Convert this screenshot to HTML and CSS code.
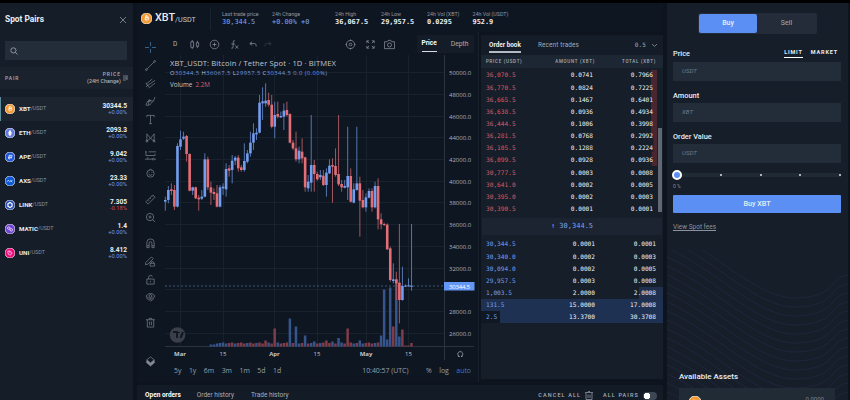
FILE: index.html
```html
<!DOCTYPE html>
<html lang="en">
<head>
<meta charset="utf-8">
<title>Spot trading</title>
<link rel="stylesheet" href="styles.css">
</head>
<body>
<div class="app">
  <aside class="pairs">
    <div class="pairs-title"><h1>Spot Pairs</h1><svg width="8" height="8" viewBox="0 0 8 8"><path d="M1 1l6 6M7 1L1 7"/></svg></div>
    <div class="search"><svg width="8" height="8" viewBox="0 0 8 8"><circle cx="3.4" cy="3.4" r="2.6"/><path d="M5.3 5.3L7.5 7.5"/></svg></div>
    <div class="pairs-head"><span>PAIR</span><div>PRICE<small>(24H Change)</small></div><svg width="5" height="8" viewBox="0 0 5 8"><path d="M0 2h3M0 4h4M0 6h3M4 1v5"/></svg></div>
    <ul class="pair-list">
      <li class="active"><svg class="coin" viewBox="0 0 12 12"><circle cx="6" cy="6" r="6" fill="#f39a35"/><path d="M4.5 3.2l3 .5q1.2.5.4 1.6l-3.2-.4 3 .5q1.4.8.1 2.2l-3.6-.6M5.2 3.3l-.7 4M5.8 2.3v1M5.5 7.6v1.4"/></svg><b>XBT</b><i>/USDT</i><div class="quote">30344.5<em>+0.00%</em></div></li>
      <li><svg class="coin" viewBox="0 0 12 12"><circle cx="6" cy="6" r="6" fill="#627be0"/><path d="M6 2L3.7 6 6 7.4 8.300 6zM3.7 7L6 10l2.300-3" fill="#fff" stroke="none"/></svg><b>ETH</b><i>/USDT</i><div class="quote">2093.3<em>+0.00%</em></div></li>
      <li><svg class="coin" viewBox="0 0 12 12"><circle cx="6" cy="6" r="6" fill="#1e55d5"/><path d="M4 8.500L5 4h3.500L7.500 8M4 6.500h4M6 4L5.500 9"/></svg><b>APE</b><i>/USDT</i><div class="quote">9.042<em>+0.00%</em></div></li>
      <li><svg class="coin" viewBox="0 0 12 12"><circle cx="6" cy="6" r="6" fill="#0d58d6"/><path d="M2.500 7l1.500-2 1.500 2M6.500 5l2 2.300M8.700 5L6.500 7.300"/></svg><b>AXS</b><i>/USDT</i><div class="quote">23.33<em>+0.00%</em></div></li>
      <li><svg class="coin" viewBox="0 0 12 12"><circle cx="6" cy="6" r="6" fill="#294fb5"/><path d="M6 3l2.500 1.500v3L6 9 3.500 7.500v-3z" stroke-width="1.400"/></svg><b>LINK</b><i>/USDT</i><div class="quote">7.305<em class="neg">-0.18%</em></div></li>
      <li><svg class="coin" viewBox="0 0 12 12"><circle cx="6" cy="6" r="6" fill="#7142cf"/><circle cx="4.500" cy="5" r="1.500"/><circle cx="7.500" cy="7" r="1.500"/></svg><b>MATIC</b><i>/USDT</i><div class="quote">1.4<em>+0.00%</em></div></li>
      <li><svg class="coin" viewBox="0 0 12 12"><circle cx="6" cy="6" r="6" fill="#ed087c"/><path d="M3 4q1 5 3 4.500T8.500 6Q7 3 4 3.500l3 3"/></svg><b>UNI</b><i>/USDT</i><div class="quote">8.412<em>+0.00%</em></div></li>
    </ul>
  </aside>

  <main>
    <header class="ticker">
      <div class="symbol"><svg class="coin" viewBox="0 0 12 12"><circle cx="6" cy="6" r="6" fill="#f39a35"/><path d="M4.5 3.200l3 .5q1.200.5.4 1.600l-3.200-.4 3 .5q1.400.8.1 2.200l-3.600-.6M5.200 3.300l-.7 4M5.800 2.300v1M5.500 7.600v1.400"/></svg><b>XBT</b><span>/USDT</span></div>
      <div class="stat blue s1"><label>Last trade price</label>30,344.5</div>
      <div class="stat blue s2"><label>24h Change</label>+0.00% +0</div>
      <div class="stat s3"><label>24h High</label>36,067.5</div>
      <div class="stat s4"><label>24h Low</label>29,957.5</div>
      <div class="stat s5"><label>24h Vol (XBT)</label>0.0295</div>
      <div class="stat s6"><label>24h Vol (USDT)</label>952.9</div>
    </header>

    <div class="market">
      <section class="chart">
        <nav class="tools">
          <svg class="cross" viewBox="0 0 12 12"><path d="M6 0v4.500M6 7.500V12M0 6h4.500M7.500 6H12"/></svg>
          <svg viewBox="0 0 12 12"><path d="M2 10l8-8"/><circle cx="1.500" cy="10.500" r="1"/><circle cx="10.500" cy="1.500" r="1"/></svg>
          <svg viewBox="0 0 12 12"><path d="M1 7l7-6M1 9.500l10-7M4 11l7-5.500M1 5l3 5"/></svg>
          <svg viewBox="0 0 12 12"><path d="M1 10q1-5 4-5t4 1l2-5M1 10q5 1 7-4M4 5v5"/><circle cx="5" cy="5" r="1"/></svg>
          <svg viewBox="0 0 12 12"><path d="M2 3.500V1.500h8v2M6 1.500v9M4.500 10.500h3"/></svg>
          <svg viewBox="0 0 12 12"><path d="M2 10V2l4 5 4-5v8M2 10l4-3 4 3"/><circle cx="2" cy="10" r="1"/><circle cx="10" cy="10" r="1"/></svg>
          <svg viewBox="0 0 12 12"><path d="M0 2h2M4 2h8M1 2v4h10V4M0 10h8M10 10h2M3 10V8"/><circle cx="9" cy="10" r="1"/></svg>
          <svg viewBox="0 0 12 12"><circle cx="6" cy="6" r="4"/><path d="M4 7q2 2 4 0M4.500 4.500v.8M7.500 4.500v.8M5 2l1-1 1 1"/></svg>
          <svg class="break" viewBox="0 0 12 12"><path d="M1 8.500L8.500 1l2.500 2.500L3.500 11zM3.500 6.500l1 1M5.500 4.500l1 1M7.500 2.500l1 1"/></svg>
          <svg viewBox="0 0 12 12"><circle cx="5.500" cy="5.500" r="4"/><path d="M8.500 8.500l2.500 2.500M3.800 5.500h3.400M5.500 3.800v3.400"/></svg>
          <svg class="break" viewBox="0 0 12 12"><path d="M2 10.500V5a4 4 0 0 1 8 0v5.500H7.500V5.500a1.500 1.500 0 0 0-3 0v5zM2 8.500h2.500M7.500 8.500H10"/></svg>
          <svg viewBox="0 0 12 12"><path d="M1 7l6-6 2 2-6 6-2.500.5zM5.500 8h5v3h-5zM6.500 8q0-2 1.500-2t1.500 2"/></svg>
          <svg viewBox="0 0 12 12"><path d="M2 5.500h8V11H2zM4 5.500V3.500q0-2 2-2t2 1.500M6 7.500v1.500"/></svg>
          <svg viewBox="0 0 12 12"><path d="M1 4.500q5-6 10 0-5 5-10 0zM1 6q3 4 6 2.500M6 10l4-3"/><circle cx="6" cy="4.300" r="1.500"/></svg>
          <svg class="trash" viewBox="0 0 12 12"><path d="M1 3h10M2.500 3v8h7V3M4.500 3V1.500h3V3M5 5v4M7 5v4"/></svg>
          <svg class="layers" viewBox="0 0 12 12"><path d="M1.500 4.500L6 1l4.500 3.500L6 8z" /><path d="M1.500 7L6 11l4.500-4-1-2.500L6 7.500 2.500 4.500z" fill="#9ba1ac"/></svg>
        </nav>
        <div class="chart-main">
          <div class="chart-bar">
            <span class="interval">D</span>
            <svg class="i-candle" viewBox="0 0 12 12"><path d="M2 3h3v6H2zM3.500 1v2M3.500 9v2M8 4h2.500v4H8zM9.200 2v2M9.200 8v2"/></svg>
            <svg class="i-plus" viewBox="0 0 12 12"><circle cx="6" cy="6" r="4.700"/><path d="M3.800 6h4.400M6 3.800v4.400"/></svg>
            <svg class="i-fx" viewBox="0 0 12 12"><path d="M6.500 2Q4.500 1 4.500 4v4q0 3-2 2M2.500 5.500h4M7 7l3 3.500M10 7l-3 3.500"/></svg>
            <svg class="i-undo" viewBox="0 0 12 12"><path d="M4.500 3L2 5l2.500 2M2 5h5.500Q9 5 9 8"/></svg>
            <svg class="i-redo dim" viewBox="0 0 12 12"><path d="M7.500 3L10 5 7.500 7M10 5H4.500Q3 5 3 8"/></svg>
            <svg class="i-gear" viewBox="0 0 12 12"><circle cx="6" cy="6" r="4.500"/><circle cx="6" cy="6" r="1.500"/><path d="M6 .5v1.500M6 10v1.500M.5 6H2M10 6h1.500"/></svg>
            <svg class="i-full" viewBox="0 0 12 12"><path d="M2 4.500V2h2.500M7.500 2H10v2.500M10 7.500V10H7.500M4.500 10H2V7.500M2 2l2.500 2.500M10 2L7.500 4.500M10 10L7.500 7.500M2 10l2.500-2.500"/></svg>
            <svg class="i-cam" viewBox="0 0 12 12"><path d="M.5 3h3L4.500 1.500h3L8.500 3h3v7.500H.5z"/><circle cx="6" cy="6.500" r="2.200"/></svg>
            <div class="view-tabs"><span class="on">Price</span><span>Depth</span></div>
          </div>
          <svg class="plot" width="313" height="311" viewBox="163 52 313 311">
            <path class="grid" d="M165 72.500H444M165 94.500H444M165 116.500H444M165 137.500H444M165 159.500H444M165 181.500H444M165 202.500H444M165 224.500H444M165 246.500H444M165 268.500H444M165 289.500H444M165 311.500H444M165 333.500H444M180.500 55V347M223.500 55V347M274.500 55V347M317.500 55V347M366.500 55V347M408.500 55V347"/>
            <path class="axis" d="M444.500 55V360M165 346.500H474"/>
            <g id="volume"></g>
            <path class="last" d="M165 286H444"/>
            <g id="candles"></g>
            <circle cx="177.500" cy="335" r="7.800" fill="#3a3f49" stroke="none"/><path d="M173 332h4v6M179 332l0 1M183 332l-2.500 6" stroke="#111923" stroke-width="2" fill="none"/>
            <text class="title" x="170" y="65.500" textLength="166">XBT_USDT: Bitcoin / Tether Spot · 1D · BITMEX</text>
            <text class="ohlc" x="170" y="75.300" textLength="157">O<tspan>30344.5</tspan> H<tspan>36067.5</tspan> L<tspan>29957.5</tspan> C<tspan>30344.5 0.0 (0.00%)</tspan></text>
            <text class="vol" x="170" y="87" textLength="40">Volume  <tspan>2.2M</tspan></text>
            <g class="prices">
              <text x="449" y="75">50000.0</text><text x="449" y="97">48000.0</text><text x="449" y="118.500">46000.0</text><text x="449" y="140">44000.0</text><text x="449" y="162">42000.0</text><text x="449" y="184">40000.0</text><text x="449" y="205">38000.0</text><text x="449" y="227">36000.0</text><text x="449" y="249">34000.0</text><text x="449" y="270.500">32000.0</text><text x="449" y="314">28000.0</text><text x="449" y="335.500">26000.0</text>
            </g>
            <rect x="444" y="282" width="30.500" height="8.500" fill="#6497f5" stroke="none"/><text class="tag" x="449" y="288.700" textLength="21">30344.5</text>
            <g class="dates"><text x="180" y="356.300" class="m">Mar</text><text x="223" y="356.300">15</text><text x="274.500" y="356.300" class="m">Apr</text><text x="317" y="356.300">15</text><text x="366" y="356.300" class="m">May</text><text x="408.500" y="356.300">15</text></g>
            <path d="M458 356.500h1.500a2.500 2.500 0 1 1 1.500 0h1.500" class="reset"/>
          </svg>
          <div class="ranges"><span>5y</span><span>1y</span><span>6m</span><span>3m</span><span>1m</span><span>5d</span><span>1d</span><span class="clock">10:40:57 (UTC)</span><span>%</span><span>log</span><span class="auto">auto</span></div>
        </div>
      </section>

      <section class="book">
        <div class="book-tabs"><b>Order book</b><span>Recent trades</span><span class="step">0.5</span><svg width="7" height="5" viewBox="0 0 7 5"><path d="M1 1l2.500 2.500L6 1"/></svg></div>
        <div class="row head"><span>PRICE (USDT)</span><span>AMOUNT (XBT)</span><span>TOTAL (XBT)</span></div>
        <div class="asks">
          <div class="ask-depth"></div>
          <div class="row"><span>36,070.5</span><span>0.0741</span><span>0.7966</span></div>
          <div class="row"><span>36,770.5</span><span>0.0824</span><span>0.7225</span></div>
          <div class="row"><span>36,665.5</span><span>0.1467</span><span>0.6401</span></div>
          <div class="row"><span>36,638.5</span><span>0.0936</span><span>0.4934</span></div>
          <div class="row"><span>36,444.5</span><span>0.1006</span><span>0.3998</span></div>
          <div class="row"><span>36,281.5</span><span>0.0768</span><span>0.2992</span></div>
          <div class="row"><span>36,105.5</span><span>0.1288</span><span>0.2224</span></div>
          <div class="row"><span>36,099.5</span><span>0.0928</span><span>0.0936</span></div>
          <div class="row"><span>30,777.5</span><span>0.0003</span><span>0.0008</span></div>
          <div class="row"><span>30,641.0</span><span>0.0002</span><span>0.0005</span></div>
          <div class="row"><span>30,395.0</span><span>0.0002</span><span>0.0003</span></div>
          <div class="row"><span>30,390.5</span><span>0.0001</span><span>0.0001</span></div>
          <div class="scroll"></div>
        </div>
        <div class="mid">↑ 30,344.5</div>
        <div class="bids">
          <div class="row"><span>30,344.5</span><span>0.0001</span><span>0.0001</span></div>
          <div class="row"><span>30,340.0</span><span>0.0002</span><span>0.0003</span></div>
          <div class="row"><span>30,094.0</span><span>0.0002</span><span>0.0005</span></div>
          <div class="row"><span>29,957.5</span><span>0.0003</span><span>0.0008</span></div>
          <div class="row d1"><span>1,003.5</span><span>2.0000</span><span>2.0008</span></div>
          <div class="row d2"><span>131.5</span><span>15.0000</span><span>17.0008</span></div>
          <div class="row d3"><span>2.5</span><span>13.3700</span><span>30.3708</span></div>
        </div>
      </section>
    </div>

    <footer class="orders"><b>Open orders</b><span class="oh">Order history</span><span class="th">Trade history</span><span class="caps cancel">CANCEL ALL</span><svg width="8" height="9" viewBox="0 0 8 9"><path d="M0 1.500h8M1 2v6.500h6V2M3 .5h2M3 3.500v3.500M5 3.500v3.500"/></svg><span class="caps all">ALL PAIRS</span><div class="toggle"></div></footer>
  </main>

  <aside class="trade">
    <svg class="waves" viewBox="0 0 180 150" preserveAspectRatio="none"><g id="waves"></g></svg>
    <div class="side"><b>Buy</b><span>Sell</span></div>
    <div class="field-head"><label>Price</label><b>LIMIT</b><span>MARKET</span></div>
    <div class="input">USDT</div>
    <label class="name">Amount</label>
    <div class="input">XBT</div>
    <label class="name">Order Value</label>
    <div class="input">USDT</div>
    <div class="slider"><u></u><s></s><s></s><s></s><s></s></div>
    <div class="pct">0 %</div>
    <div class="buy">Buy XBT</div>
    <a>View Spot fees</a>
    <h2>Available Assets</h2>
    <div class="asset"><svg class="coin" viewBox="0 0 12 12"><circle cx="6" cy="6" r="6" fill="#f39a35"/><path d="M4 4l4 .7"/></svg><span>0.0000</span></div>
  </aside>
</div>
<script src="chart.js"></script>
</body>
</html>
```
FILE: chart.js
```js
// Candle: [high, body top, body bottom, low, up?]; levels in thirds of a pixel from y = 100.
const candles = [
[290,300,305,332,1],[258,270,300,310,1],[250,268,273,285,0],[255,270,320,330,0],[130,138,320,322,1],
[92,118,140,150,1],[95,110,116,120,1],[105,108,162,185,0],[160,162,272,274,0],[260,262,272,285,1],
[260,262,295,297,0],[285,293,298,332,0],[270,290,296,300,1],[160,178,290,292,1],[170,178,262,270,0],
[245,262,278,315,0],[265,276,282,300,0],[255,280,320,322,0],[255,262,320,322,1],[250,260,265,285,1],
[190,207,268,290,1],[195,205,212,230,0],[165,182,210,250,1],[168,173,182,195,1],[165,173,205,215,0],
[195,202,210,215,0],[130,183,210,215,1],[150,160,185,190,1],[95,128,160,170,1],[70,100,128,150,1],
[85,98,103,120,1],[-15,8,98,100,1],[-38,4,10,60,1],[-50,2,10,20,1],[-22,0,14,20,0],
[-15,14,80,85,0],[5,45,80,115,1],[5,42,50,55,0],[35,48,52,54,1],[10,32,50,90,1],
[5,30,45,50,0],[40,42,128,130,0],[120,128,145,150,0],[95,145,178,185,0],[140,152,178,190,1],
[115,155,175,190,0],[170,172,262,275,0],[225,245,265,275,1],[45,195,248,275,1],[180,195,222,275,0],
[215,222,238,242,0],[210,225,232,240,1],[210,227,255,258,0],[205,218,255,290,1],[178,197,220,222,1],
[175,195,200,308,0],[145,198,225,230,0],[45,222,253,258,0],[240,252,262,275,0],[240,258,263,265,1],
[80,228,262,300,1],[205,228,305,308,0],[250,268,308,310,1],[80,250,270,272,1],[230,250,302,410,0],
[270,300,322,325,0],[280,292,322,335,1],[265,273,293,295,1],[265,273,322,335,0],[245,258,322,325,1],
[235,258,358,388,0],[340,358,373,388,0],[368,372,375,378,0],[370,374,448,450,0],[440,445,540,545,0],
[490,538,543,550,1],[515,538,550,600,0],[372,548,600,670,0],[500,558,600,602,1],[553,557,559,561,1],
[535,556,558,560,1],[372,557,559,572,1]];
// Volume bars that stand out from the base level: day -> [height, up?]
const peaks = {28:[6,0],31:[18,0],36:[28,1],38:[20,1],41:[11,1],44:[5,1],48:[6,0],50:[5,1],52:[8.5,1],55:[18,0],59:[6,1],66:[11,1],67:[57,1],68:[7,1],69:[59,1],70:[20,0],71:[67,1],72:[10,1],73:[17,0],74:[1,0],75:[1,0],76:[3.5,0]};
const x = day => 180.5 + 3.04 * day;
let out = '', vol = '';
candles.forEach(([h, t, b, l, up], n) => {
  const cx = x(n - 5), y = v => 100 + v / 3;
  const body = up ? '#739df0' : '#e56e76', wick = up ? '#5674ae' : '#a25660';
  out += `<rect x="${cx - .5}" y="${y(h)}" width="1" height="${(l - h) / 3}" fill="${wick}"/>`;
  out += `<rect x="${cx - 1.3}" y="${y(t)}" width="2.6" height="${Math.max(1, (b - t) / 3)}" fill="${body}"/>`;
});
for (let d = 10; d < 77; d++) {
  const [h, up] = peaks[d] || [d < 12 ? 2 : 3 + (d * 7 % 3) / 2, d < 15 || d * 5 % 7 > 4];
  vol += `<rect x="${x(d) - 1.3}" y="${346.500 - h}" width="2.5" height="${h}" fill="${up ? '#37558d' : '#803c49'}"/>`;
}
document.getElementById('candles').innerHTML = out;
document.getElementById('volume').innerHTML = vol;
let waves = '';
for (let i = 0; i < 20; i++) {
  const y = i * 9 - 20;
  waves += `<path d="M0 ${y}C50 ${y + 22} 90 ${y + 70} 130 ${y + 68}S160 ${y + 48} 180 ${y + 45}"/>`;
}
document.getElementById('waves').innerHTML = waves;
```
FILE: styles.css
```css
*{box-sizing:border-box}
body{margin:0;width:850px;height:400px;overflow:hidden;background:#0d141e;color:#e9edf3;font-family:Roboto,"Liberation Sans",sans-serif;font-size:7px;line-height:1}
svg{fill:none;stroke:#8d949f;stroke-width:.8;flex:none}
h1,h2,ul{margin:0;padding:0}
i,em{font-style:normal}
.app{display:grid;grid-template-columns:133px 526px 181px;column-gap:4px;height:400px;border-top:3px solid #000}
.coin{width:11px;height:11px;stroke:#fff}

.pairs{background:#141d28}
.pairs-title{display:flex;justify-content:space-between;align-items:center;height:33px;padding:0 6px 0 5px}
.pairs-title h1{font-size:8.4px;font-weight:700}
.search{height:19px;margin:5px 6px 0 5px;background:#232d39;display:flex;align-items:center;padding-left:5px}
.search svg{stroke:#a3a9b2}
.pairs-head{height:22px;margin-top:7px;background:#19222d;display:flex;align-items:center;padding:0 5px;font-size:5px;font-weight:500;letter-spacing:.9px;color:#abb1bb}
.pairs-head div{margin-left:auto;text-align:right;margin-right:2px}
.pairs-head small{display:block;font-size:5.300px;letter-spacing:.1px;margin-top:2px}
.pair-list{list-style:none;padding-top:8px}
.pair-list li{height:24px;display:flex;align-items:center;padding:0 6px 0 5px;font-size:6.200px}
.pair-list li.active{background:#1b242f;box-shadow:inset 1px 0 #5d8d9c}
.pair-list .coin{width:10px;height:10px}
.pair-list b{margin-left:4px;font-weight:700}
.pair-list i{font-size:5.400px;color:#89919e}
.quote{margin-left:auto;text-align:right;font-weight:700;font-size:6.600px}
.quote em{display:block;font-size:5.800px;font-weight:400;color:#6d97ee;margin-top:.5px}
.quote .neg{color:#c94e5a}

main{display:flex;flex-direction:column}
.ticker{height:29px;display:flex;align-items:center;background:#0e1621;padding:2px 0 0 4px}
.symbol{display:flex;align-items:center;width:70px;border-right:1px solid #19232f;height:22px}
.symbol b{font-size:10.800px;font-weight:500;margin-left:3px}
.symbol span{font-size:7.200px;padding-top:2px;color:#c0c6cf}
.stat{font-family:"DejaVu Sans Mono",monospace;font-size:6.900px;font-weight:700;white-space:pre}
.stat.blue{color:#7ca6f3;font-weight:400}
.stat label{display:block;font:5.300px Roboto,sans-serif;color:#8f96a2;margin-bottom:2px}
.s1{width:50px;margin-left:11px}.s2{width:63px}.s3{width:46px}.s4{width:46px}.s5{width:45.500px}

.market{display:grid;grid-template-columns:342px 182px;column-gap:2px;height:350px;background:#0d141e}
.chart{display:flex;background:#0e1621;border-right:1px solid #17202b}
.tools{width:26px;flex:none;padding-top:6px;display:flex;flex-direction:column;align-items:center}
.tools svg{width:11px;height:11px;margin:3.500px 0;opacity:.85}
.tools .cross{stroke:#4f90cc}
.tools .break{margin-top:11.500px}
.tools .trash{margin-top:10.500px}
.tools .layers{margin-top:24.500px}
.chart-main{flex:1;min-width:0}
.chart-bar{display:flex;align-items:center;height:20px;padding-top:4px}
.chart-bar svg{width:11px;height:11px}
.interval{width:5px;margin-left:10px;color:#aeb3bb;font-size:6.500px}
.i-candle{margin-left:11px}.i-plus{margin-left:8.500px}.i-fx{margin-left:9px}.i-undo{margin-left:8px}.i-redo{margin-left:3px}.dim{opacity:.3}.i-gear{margin-left:72px}.i-full{margin-left:9px}.i-cam{margin-left:8px}
.view-tabs{display:flex;align-items:center;gap:14px;margin-left:22px;background:#131c27;height:18px;padding:0 5px}
.view-tabs span{padding:4px 0;color:#a6adb7;font-size:6.800px}
.view-tabs .on{color:#fff;font-weight:700;font-size:6.500px;border-bottom:1px solid #d6dae0}
.plot{display:block}
.plot rect{stroke:none}
#candles,#volume{stroke:none}
.grid,.axis{stroke:#18222d;stroke-width:1}
.axis{stroke:#2b333f}
.last{stroke:#49648d;stroke-dasharray:2 2;stroke-width:.8}
.plot text{stroke:none;fill:#c0c5ce;font-family:"Open Sans","Noto Sans",sans-serif;white-space:pre}
.plot .title{font-size:7.600px}
.plot .ohlc{font-size:5.800px}
.plot .ohlc tspan{fill:#7198e2}
.plot .vol{font-size:6.300px}
.plot .vol tspan{fill:#d55d69}
.plot .prices text{font-size:6px;fill:#aeb3bd}
.plot .tag{font-size:6px;fill:#fff}
.plot .dates text{font-size:6px;text-anchor:middle}
.plot .dates .m{font-weight:700}
.reset{stroke:#a2a8b1}
.ranges{display:flex;align-items:center;height:17px;padding:0 7px 0 11px;color:#98a0ab;font-family:"Open Sans",sans-serif;font-size:6.900px;gap:7.500px}
.clock{margin-left:auto;margin-right:10px}
.ranges .auto{color:#4178bb}

.book{background:#151e29;margin-top:3px;height:344px}
.book-tabs{height:20px;display:flex;align-items:center;padding:0 5px 0 8px;font-size:6.400px;background:#131c27}
.book-tabs b{border-bottom:2px solid #b4bac3;padding:5px 0 3px}
.book-tabs span{margin-left:17px;color:#a3aab6;letter-spacing:.15px}
.book-tabs .step{margin-left:auto;margin-right:5px;font-family:"DejaVu Sans Mono",monospace;font-size:6px}
.row{display:grid;grid-template-columns:60px 49px 1fr;align-items:center;height:12.150px;padding:0 7px 0 5px;font-family:"DejaVu Sans Mono",monospace;font-size:6.150px;color:#eef1f5}
.row span:nth-child(n+2){text-align:right}
.row.head{height:13px;background:#1d2733;color:#a4abb6;font:500 4.500px Roboto,sans-serif;letter-spacing:.7px}
.asks{position:relative;height:149.500px;padding-top:1.500px}
.asks .row{grid-template-columns:60px 47px 1fr;padding-right:10px;position:relative}
.asks .row span:first-child{color:#d95c68}
.bids .row span:first-child{color:#779ff0}
.ask-depth{position:absolute;right:6px;top:2px;width:6px;height:96px;background:#6e2b3799;clip-path:polygon(0 0,100% 0,100% 100%,10% 100%,10% 85%,40% 85%,40% 70%,0 70%)}
.scroll{position:absolute;right:1px;top:60px;width:4px;height:84px;background:#606873}
.mid{height:17px;margin:0 1px 4px;background:#1b2430;color:#7ca3f0;font:7px/17px "DejaVu Sans Mono",monospace;text-align:center}
.bids .row{padding-right:7px}
.bids .d1{background:linear-gradient(90deg,transparent 87%,#1f2f4d 87%)}
.bids .d2{background:#1f3152}
.bids .d3{background:linear-gradient(90deg,#101923 10.500%,#1f3152 10.500%)}

.orders{flex:1;display:flex;align-items:center;background:#131b27;margin-top:3px;padding:6px 6px 0 8px;font-size:6.500px;color:#a7aeb9}
.orders b{color:#fff}
.oh{margin-left:16px}.th{margin-left:17px}
.caps{font-size:5.500px;font-weight:500;letter-spacing:1.100px}
.cancel{margin-left:auto;margin-right:4px}
.all{margin:0 4px 0 10px}
.toggle{flex:none;width:14px;height:8px;border-radius:4px;background:radial-gradient(circle at 4px 4px,#fff 3px,#3d4653 3.500px)}

.trade{position:relative;background:#151e29;padding:10px 7px 0 6px;display:flex;flex-direction:column;overflow:hidden;height:397px}
.trade>*{flex:none}
.waves{position:absolute;left:0;bottom:0;width:181px;height:150px;stroke:#302d52;stroke-width:.8;opacity:.6}
.side{display:flex;width:119px;height:21px;margin-left:25px;padding:1px;background:#232c38;border-radius:2px;line-height:18px;text-align:center;font-size:7px}
.side b{width:58px;background:#5b8ff4;border-radius:2px;font-weight:500}
.side span{flex:1;color:#a6adb7}
.field-head{display:flex;align-items:flex-end;height:24px;margin-bottom:4px}
.field-head label,.name{font-size:7.400px;font-weight:500}
.field-head label{padding-bottom:1px}
.field-head b,.field-head span{font-size:5.500px;font-weight:700;letter-spacing:.85px}
.field-head b{margin-left:auto;border-bottom:1px solid #fff;padding-bottom:2px}
.field-head span{margin:0 3px 3px 8px}
.input{height:18.500px;background:#232d39;line-height:18px;padding-left:9px;font-size:6.200px;font-style:italic;color:#707985}
.name{height:22.700px;padding-top:11px}
.slider{display:flex;align-items:center;justify-content:space-between;height:10px;margin-top:7.500px;background:linear-gradient(#202a35,#202a35) 0 50%/100% 4px no-repeat}
.slider u{width:10px;height:10px;margin-left:-1px;border-radius:50%;background:#5b8ff4;border:2px solid #fff}
.slider s{width:2px;height:2px;background:#aab1bb}
.pct{height:15px;padding-top:4px;font-size:5px;color:#858d99}
.buy{height:18px;background:#5b8ff4;border-radius:1px;line-height:18px;text-align:center;font-size:7.200px;font-weight:500}
.trade a{font-size:6.500px;color:#8b929e;text-decoration:underline;margin-top:11px}
.trade h2{font-size:8px;font-weight:500;margin:142px 0 0 6px;position:relative}
.asset{position:relative;height:20px;margin:7px 6px 0;background:#212b36;padding:8px 11px 0;display:flex;justify-content:space-between;color:#7b8490;font-size:6px}
.asset .coin{width:12px;height:12px;margin-left:-1px}
```
